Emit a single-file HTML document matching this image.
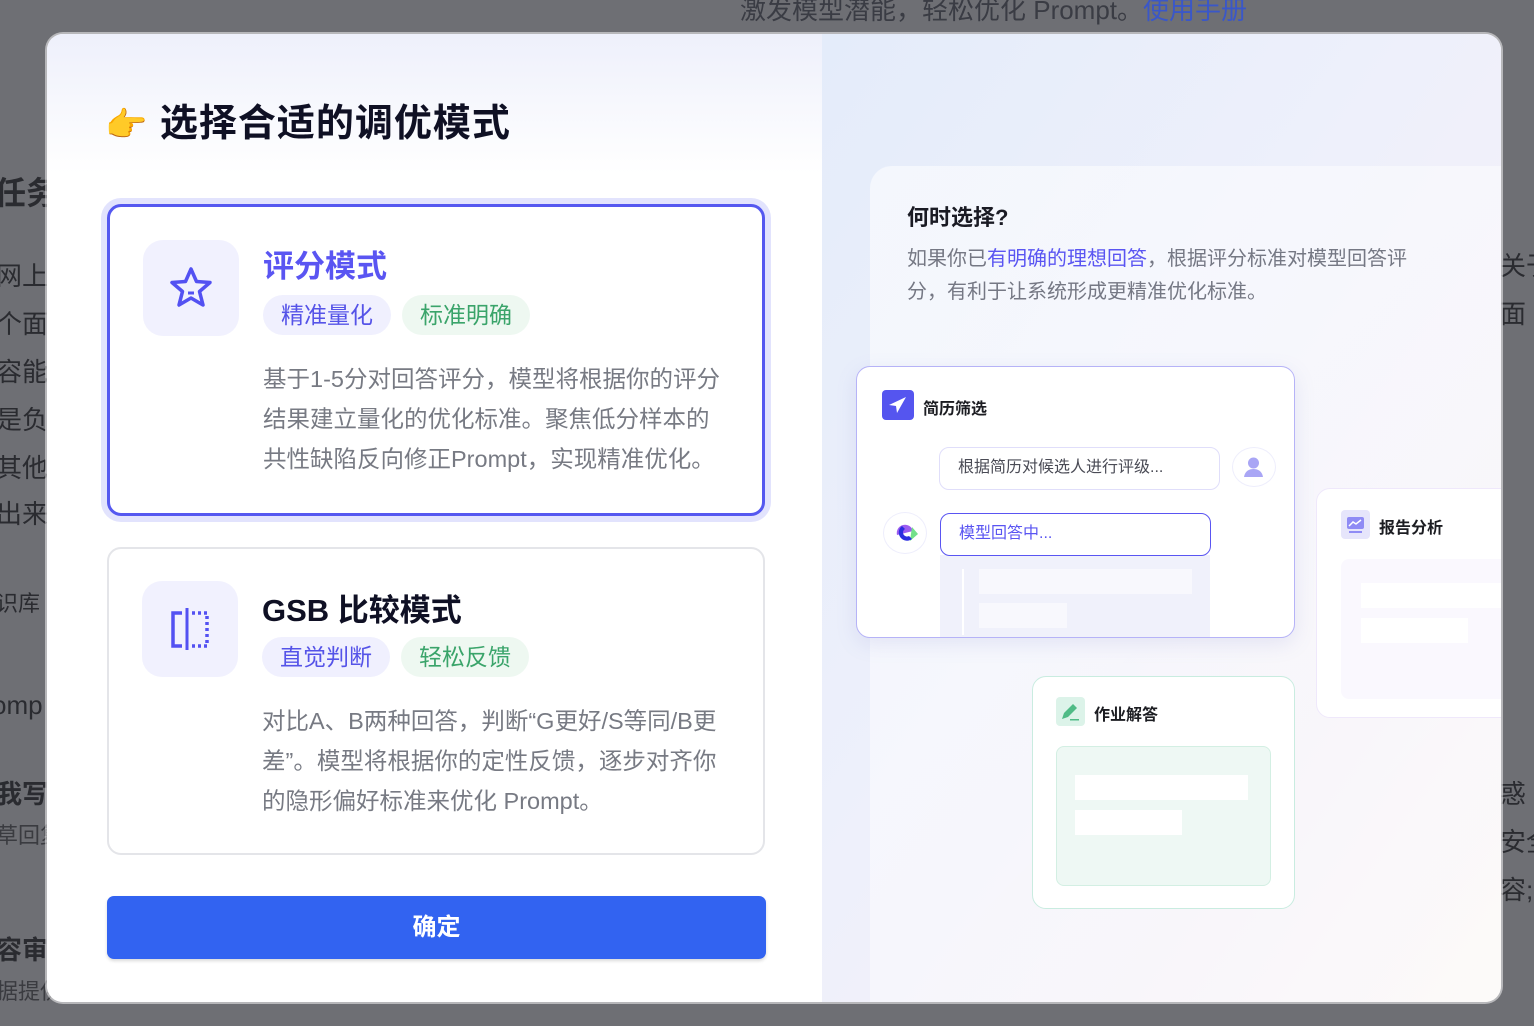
<!DOCTYPE html>
<html><head><meta charset="utf-8"><style>
*{margin:0;padding:0;box-sizing:border-box}
body{width:1534px;height:1026px;overflow:hidden;background:#6e6f74;font-family:"Liberation Sans","Noto Sans CJK SC",sans-serif;position:relative}
.bgt{position:absolute;color:#2a2b30;font-size:26px;white-space:nowrap}
.modal{position:absolute;left:47px;top:34px;width:1454px;height:968px;border-radius:16px;overflow:hidden;background:#fff;box-shadow:0 0 0 2px rgba(255,255,255,.5)}
.left{position:absolute;left:0;top:0;width:775px;height:968px;background:linear-gradient(180deg,#eef0fb 0,#fff 140px)}
.right{position:absolute;left:775px;top:0;width:679px;height:968px;background:linear-gradient(125deg,#e4ecfa 0%,#eef0fb 45%,#f5f1f7 75%,#fbf8f6 100%)}
.title{position:absolute;font-size:38px;font-weight:bold;color:#0f1024;letter-spacing:1px}
.card{position:absolute;left:60px;width:658px;border-radius:14px;background:#fff}
.ic{position:absolute;left:33px;width:96px;height:96px;border-radius:20px;background:#f1f1fe}
.h{position:absolute;left:153px;font-size:31px;font-weight:bold}
.tag{position:absolute;height:40px;line-height:40px;border-radius:20px;font-size:23px;padding:0 18px}
.d{position:absolute;left:153px;width:462px;font-size:23.5px;line-height:40px;color:#777a83}
.btn{position:absolute;left:60px;top:862px;width:659px;height:63px;border-radius:7px;background:#3263f1;color:#fff;font-size:24px;font-weight:bold;text-align:center;line-height:63px;box-shadow:0 2px 3px rgba(0,0,0,.15)}
.rc{position:absolute;left:48px;top:132px;width:700px;height:900px;border-radius:22px;background:linear-gradient(135deg,rgba(255,255,255,.55),rgba(255,255,255,.3))}
.mini{position:absolute;background:#fff;border-radius:14px}
.mt{position:absolute;font-size:16px;font-weight:bold;color:#1c1d22}
</style></head><body>
<div class="bgt" style="left:740px;top:-10px;color:#3a3c44">激发模型潜能，轻松优化 Prompt。<span style="color:#3a57c8">使用手册</span></div>
<div class="bgt" style="left:-6px;top:168px;font-size:32px;font-weight:bold">任务</div>
<div class="bgt" style="left:-4px;top:256px">网上</div>
<div class="bgt" style="left:-4px;top:304px">个面</div>
<div class="bgt" style="left:-4px;top:352px">容能</div>
<div class="bgt" style="left:-4px;top:400px">是负</div>
<div class="bgt" style="left:-4px;top:448px">其他</div>
<div class="bgt" style="left:-4px;top:494px">出来</div>
<div class="bgt" style="left:-4px;top:586px;font-size:22px">识库</div>
<div class="bgt" style="left:-8px;top:690px;font-size:26px">omp</div>
<div class="bgt" style="left:-4px;top:774px;font-weight:bold">我写-</div>
<div class="bgt" style="left:-4px;top:818px;font-size:22px;color:#3a3b40">草回复</div>
<div class="bgt" style="left:-4px;top:930px;font-weight:bold">容审</div>
<div class="bgt" style="left:-4px;top:974px;font-size:22px;color:#3a3b40">据提供</div>
<div class="bgt" style="left:1500px;top:246px">关于</div>
<div class="bgt" style="left:1500px;top:294px">面</div>
<div class="bgt" style="left:1500px;top:774px">惑</div>
<div class="bgt" style="left:1500px;top:822px">安全</div>
<div class="bgt" style="left:1500px;top:870px">容;</div>

<div class="modal">
 <div class="left">
  <div class="title" style="left:58px;top:58px"><span style="font-size:34px">👉</span> 选择合适的调优模式</div>
  <div class="card" style="top:170px;height:312px;border:3px solid #5558f0;box-shadow:0 0 0 6px #e2e3fd">
   <div class="ic" style="top:33px"><svg width="96" height="96" viewBox="0 0 96 96"><path d="M48 29 L53.5 41.5 L67 42.5 L56.5 51.5 L60 65 L48 58 L36 65 L39.5 51.5 L29 42.5 L42.5 41.5 Z" fill="none" stroke="#5351f2" stroke-width="3.5" stroke-linejoin="round"/><path d="M45 53h6" stroke="#5351f2" stroke-width="3"/></svg></div>
   <div class="h" style="top:34px;color:#5a55f2">评分模式</div>
   <div class="tag" style="left:153px;top:88px;background:#f0f0fe;color:#5553e8">精准量化</div>
   <div class="tag" style="left:292px;top:88px;background:#eef8f1;color:#3aa46a">标准明确</div>
   <div class="d" style="top:152px">基于1-5分对回答评分，模型将根据你的评分结果建立量化的优化标准。聚焦低分样本的共性缺陷反向修正Prompt，实现精准优化。</div>
  </div>
  <div class="card" style="top:513px;height:308px;border:2px solid #e4e5e9">
   <div class="ic" style="top:32px"><svg width="96" height="96" viewBox="0 0 96 96"><path d="M40 32h-9v33h9" fill="none" stroke="#5351f2" stroke-width="3.5"/><path d="M45 27v42" stroke="#5351f2" stroke-width="3"/><path d="M50 32h15v33h-15" fill="none" stroke="#5351f2" stroke-width="3.5" stroke-dasharray="3 3"/></svg></div>
   <div class="h" style="top:36px;color:#0f1024;font-weight:bold">GSB 比较模式</div>
   <div class="tag" style="left:153px;top:88px;background:#f0f0fe;color:#5553e8">直觉判断</div>
   <div class="tag" style="left:292px;top:88px;background:#eef8f1;color:#3aa46a">轻松反馈</div>
   <div class="d" style="top:152px">对比A、B两种回答，判断“G更好/S等同/B更差”。模型将根据你的定性反馈，逐步对齐你的隐形偏好标准来优化 Prompt。</div>
  </div>
  <div class="btn">确定</div>
 </div>
 <div class="right">
  <div class="rc"></div>
  <div style="position:absolute;left:85px;top:166px;font-size:22px;font-weight:bold;color:#1a1b24">何时选择?</div>
  <div style="position:absolute;left:85px;top:209px;width:525px;font-size:20px;line-height:33px;color:#757884">如果你已<span style="color:#5a55f2">有明确的理想回答</span>，根据评分标准对模型回答评分，有利于让系统形成更精准优化标准。</div>

  <div class="mini" style="left:34px;top:332px;width:439px;height:272px;border:1.5px solid #b6b3f7;box-shadow:0 6px 20px rgba(120,130,200,.15)">
   <div style="position:absolute;left:25px;top:23px;width:32px;height:30px;border-radius:4px;background:#5555ef"><svg width="32" height="30" viewBox="0 0 32 30"><path d="M24 7 L7 15 L14 16 L15 23 Z" fill="#fff"/></svg></div>
   <div class="mt" style="left:66px;top:28px">简历筛选</div>
   <div style="position:absolute;left:82px;top:80px;width:281px;height:43px;border:1.5px solid #e0defa;border-radius:10px;font-size:16px;color:#4a4b55;line-height:40px;padding-left:18px">根据简历对候选人进行评级...</div>
   <div style="position:absolute;left:375px;top:80px;width:44px;height:40px;border-radius:50%;border:1.5px solid #eeeefc;background:#fff"><svg width="41" height="38" viewBox="0 0 41 38"><circle cx="20.5" cy="15" r="5.5" fill="#a9a6f5"/><path d="M11 29c1-6 5-8 9.5-8s8.5 2 9.5 8z" fill="#a9a6f5"/></svg></div>
   <div style="position:absolute;left:26px;top:145px;width:44px;height:42px;border-radius:50%;border:1.5px solid #eeeefc;background:#fff"><svg width="41" height="40" viewBox="0 0 41 40"><path d="M13 22a8 8 0 0 1 16 -4z" fill="#9c5cf0"/><path d="M28 14l6 7-8 7z" fill="#72e08a"/><path d="M18 13a8 8 0 1 0 10 13l-3-3a4 4 0 1 1 -4-7z" fill="#2b2ee0"/></svg></div>
   <div style="position:absolute;left:83px;top:188px;width:270px;height:82px;background:#f0f1fb"></div>
   <div style="position:absolute;left:105px;top:202px;width:2px;height:66px;background:#fff"></div>
   <div style="position:absolute;left:122px;top:202px;width:213px;height:25px;background:#f8f8fd"></div>
   <div style="position:absolute;left:122px;top:236px;width:88px;height:25px;background:#f8f8fd"></div>
   <div style="position:absolute;left:83px;top:146px;width:271px;height:43px;border:1.5px solid #5a55f2;border-radius:10px;background:#fff;font-size:16px;color:#5a55f2;line-height:40px;padding-left:18px">模型回答中...</div>
  </div>

  <div class="mini" style="left:494px;top:454px;width:220px;height:230px;border:1px solid #efe8fb">
   <div style="position:absolute;left:24px;top:21px;width:29px;height:29px;border-radius:4px;background:#e6e5fb"><svg width="29" height="29" viewBox="0 0 29 29"><rect x="6" y="7" width="17" height="12" rx="2" fill="#8f8bf5"/><path d="M8 16l4-4 3 2 5-4" stroke="#fff" stroke-width="1.5" fill="none"/><rect x="8" y="21" width="13" height="2" fill="#8f8bf5"/></svg></div>
   <div class="mt" style="left:62px;top:25px">报告分析</div>
   <div style="position:absolute;left:24px;top:70px;width:200px;height:140px;border-radius:8px;background:#faf8fe"></div>
   <div style="position:absolute;left:44px;top:94px;width:180px;height:25px;background:#fff"></div>
   <div style="position:absolute;left:44px;top:129px;width:107px;height:25px;background:#fff"></div>
  </div>

  <div class="mini" style="left:210px;top:642px;width:263px;height:233px;border:1.5px solid #c9ece0">
   <div style="position:absolute;left:23px;top:20px;width:29px;height:29px;border-radius:4px;background:#dcf3e9"><svg width="29" height="29" viewBox="0 0 29 29"><path d="M6 22l2-6 9-9 4 4-9 9z" fill="#4fbb86"/><rect x="14" y="22" width="9" height="1.5" fill="#4fbb86"/></svg></div>
   <div class="mt" style="left:61px;top:24px">作业解答</div>
   <div style="position:absolute;left:23px;top:69px;width:215px;height:140px;border-radius:8px;background:#eef8f4;border:1px solid #d3efe3"></div>
   <div style="position:absolute;left:42px;top:98px;width:173px;height:25px;background:#fff"></div>
   <div style="position:absolute;left:42px;top:133px;width:107px;height:25px;background:#fff"></div>
  </div>
 </div>
</div>
</body></html>
